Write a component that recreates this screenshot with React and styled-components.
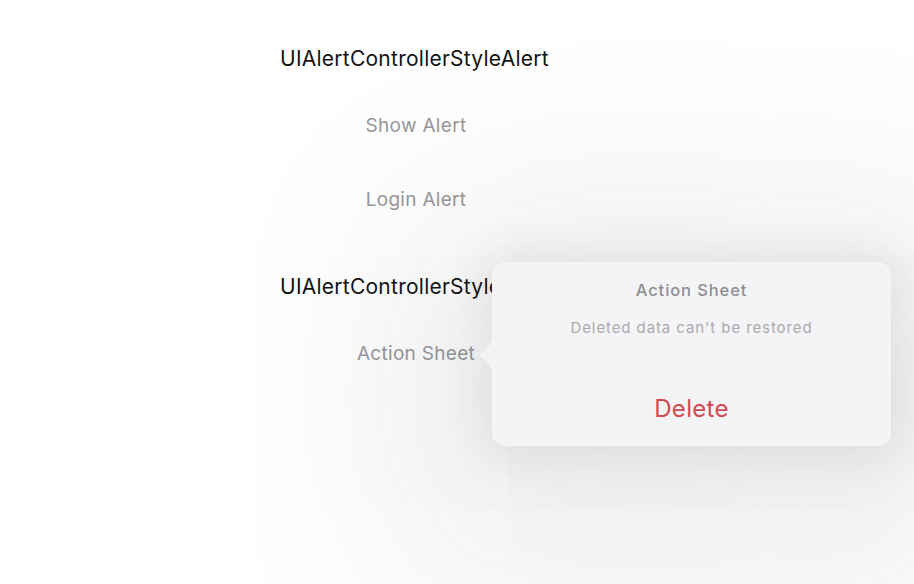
import styled, { createGlobalStyle } from 'styled-components';

const GlobalStyle = createGlobalStyle`
    html, body {
        margin: 0;
        padding: 0;
        background: #ffffff;
    }
    body {
        font-family: Inter, "Noto Sans", "Liberation Sans", sans-serif;
        -webkit-font-smoothing: antialiased;
    }
`;

const Screen = styled.div`
    position: relative;
    width: 914px;
    height: 584px;
    overflow: hidden;
    background: #ffffff;
`;

const Column = styled.div`
    display: flex;
    flex-direction: column;
    width: 272px;
    margin-left: 280px;
    padding-top: 43px;
`;

const SectionTitle = styled.div`
    height: ${p => p.$h}px;
    font-size: 21px;
    color: #141414;
    letter-spacing: 0.25px;
    white-space: nowrap;
    line-height: 32px;
`;

const ActionButton = styled.div`
    height: ${p => p.$h}px;
    text-align: center;
    font-size: 19px;
    color: #98989c;
    line-height: 32px;
    letter-spacing: 0.3px;
`;

const Popover = styled.div`
    position: absolute;
    left: 492px;
    top: 262px;
    width: 399px;
    height: 184px;
    border-radius: 13px;
    background: #f4f4f6;
    box-shadow: 0 40px 200px 90px rgba(50, 50, 70, 0.1), 0 0 40px 14px rgba(50, 50, 70, 0.07);
    display: flex;
    flex-direction: column;
    align-items: center;
`;

const Arrow = styled.svg`
    position: absolute;
    left: -13px;
    top: 70px;
    width: 14px;
    height: 46px;
`;

const PopTitle = styled.div`
    margin-top: 18px;
    font-size: 16.5px;
    font-weight: 500;
    color: #8d8d92;
    letter-spacing: 0.9px;
`;

const PopMessage = styled.div`
    margin-top: 18px;
    font-size: 15px;
    color: #aaaaae;
    letter-spacing: 0.9px;
`;

const DeleteButton = styled.div`
    margin-top: 57px;
    font-size: 24px;
    color: #d24a4e;
    letter-spacing: 0.3px;
`;

export default function App() {
    return (
        <Screen>
            <GlobalStyle />
            <Column>
                <SectionTitle $h={67}>UIAlertControllerStyleAlert</SectionTitle>
                <ActionButton $h={74}>Show Alert</ActionButton>
                <ActionButton $h={87}>Login Alert</ActionButton>
                <SectionTitle $h={67}>UIAlertControllerStyleActionSheet</SectionTitle>
                <ActionButton $h={40}>Action Sheet</ActionButton>
            </Column>
            <Popover>
                <Arrow viewBox="0 0 14 46">
                    <path d="M14 0 C14 11 9 15 4 20 C0 22 0 24 4 26 C9 31 14 35 14 46 Z" fill="#f4f4f6" />
                </Arrow>
                <PopTitle>Action Sheet</PopTitle>
                <PopMessage>Deleted data can't be restored</PopMessage>
                <DeleteButton>Delete</DeleteButton>
            </Popover>
        </Screen>
    );
}
